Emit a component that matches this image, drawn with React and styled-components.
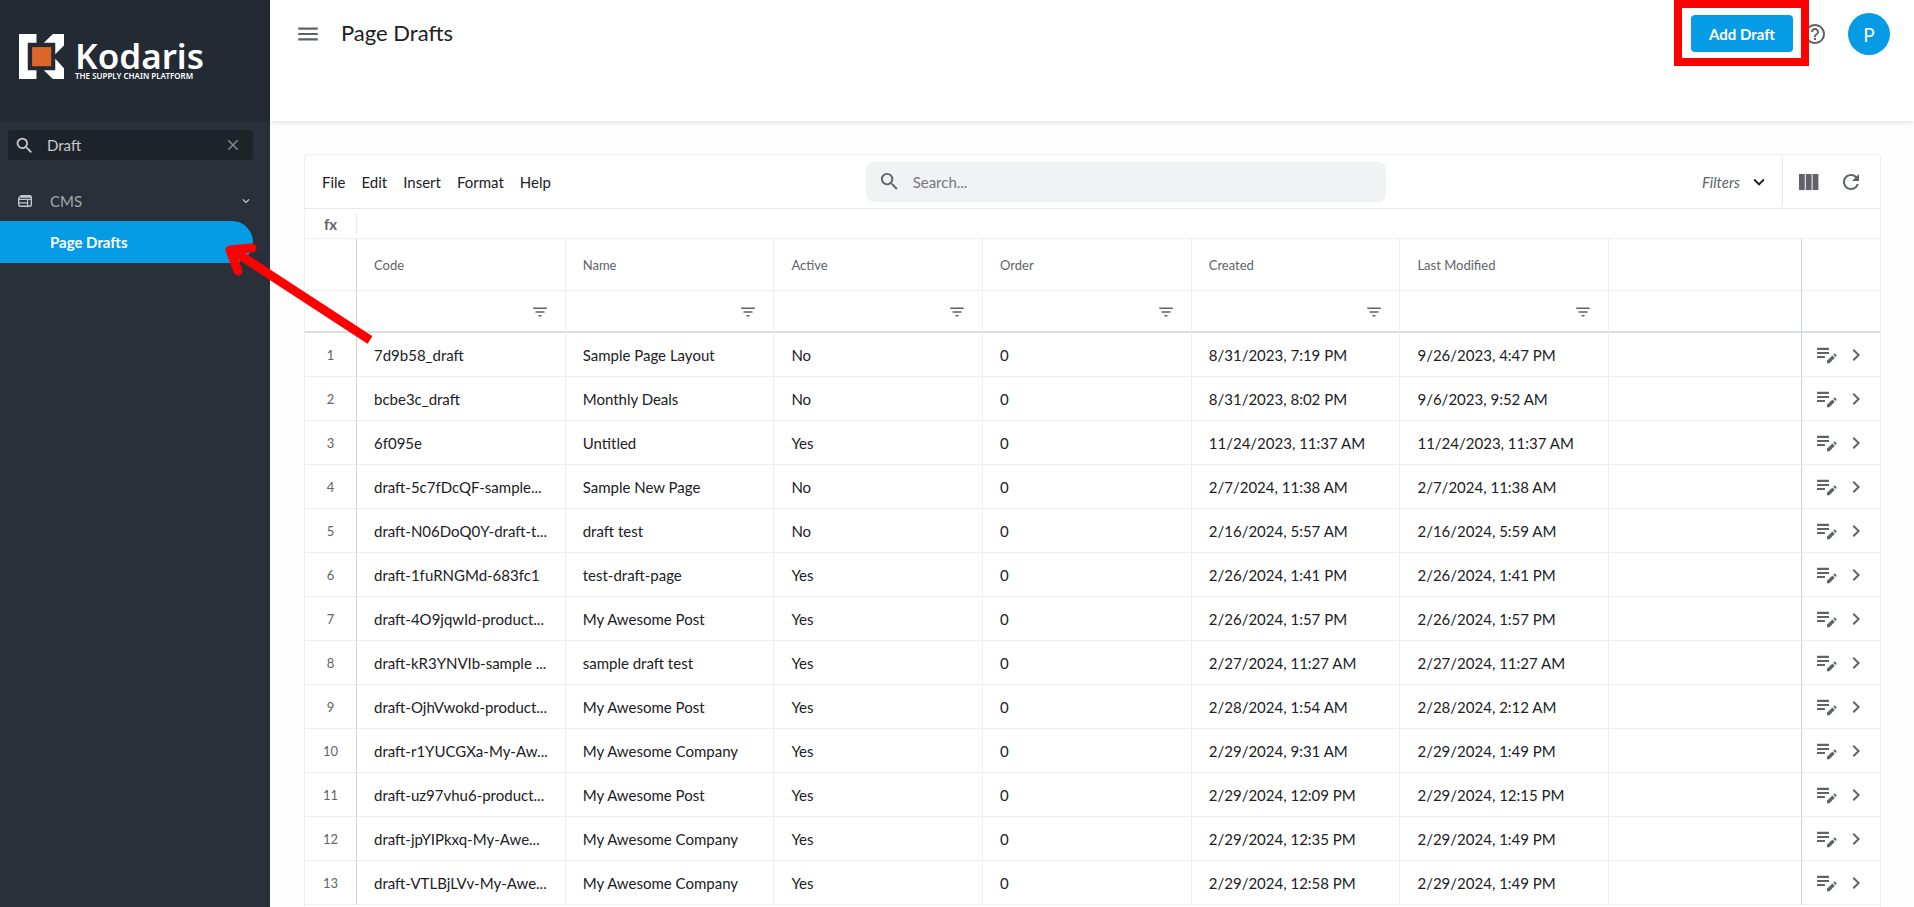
import React from "react";
import styled, { createGlobalStyle, ThemeProvider } from "styled-components";
import {
  MdChevronRight,
  MdClose,
  MdExpandMore,
  MdFilterList,
  MdHelpOutline,
  MdMenu,
  MdRefresh,
  MdSearch,
} from "react-icons/md";

const theme = {
  color: {
    blue: "#069be5",
    red: "#ff0000",
    orange: "#dc6529",
    white: "#ffffff",
    black: "#202124",
    gray: "#5f6368",
    line: "#eeeff0",
    pinLine: "#cfd2da",
    side: "#2a303a",
    sideTop: "#232a33",
    sideInput: "#1e2229",
  },
};

const columns = ["Code", "Name", "Active", "Order", "Created", "Last Modified"];

const drafts = [
  ["7d9b58_draft", "Sample Page Layout", "No", "0", "8/31/2023, 7:19 PM", "9/26/2023, 4:47 PM"],
  ["bcbe3c_draft", "Monthly Deals", "No", "0", "8/31/2023, 8:02 PM", "9/6/2023, 9:52 AM"],
  ["6f095e", "Untitled", "Yes", "0", "11/24/2023, 11:37 AM", "11/24/2023, 11:37 AM"],
  ["draft-5c7fDcQF-sample...", "Sample New Page", "No", "0", "2/7/2024, 11:38 AM", "2/7/2024, 11:38 AM"],
  ["draft-N06DoQ0Y-draft-t...", "draft test", "No", "0", "2/16/2024, 5:57 AM", "2/16/2024, 5:59 AM"],
  ["draft-1fuRNGMd-683fc1", "test-draft-page", "Yes", "0", "2/26/2024, 1:41 PM", "2/26/2024, 1:41 PM"],
  ["draft-4O9jqwId-product...", "My Awesome Post", "Yes", "0", "2/26/2024, 1:57 PM", "2/26/2024, 1:57 PM"],
  ["draft-kR3YNVIb-sample ...", "sample draft test", "Yes", "0", "2/27/2024, 11:27 AM", "2/27/2024, 11:27 AM"],
  ["draft-OjhVwokd-product...", "My Awesome Post", "Yes", "0", "2/28/2024, 1:54 AM", "2/28/2024, 2:12 AM"],
  ["draft-r1YUCGXa-My-Aw...", "My Awesome Company", "Yes", "0", "2/29/2024, 9:31 AM", "2/29/2024, 1:49 PM"],
  ["draft-uz97vhu6-product...", "My Awesome Post", "Yes", "0", "2/29/2024, 12:09 PM", "2/29/2024, 12:15 PM"],
  ["draft-jpYIPkxq-My-Awe...", "My Awesome Company", "Yes", "0", "2/29/2024, 12:35 PM", "2/29/2024, 1:49 PM"],
  ["draft-VTLBjLVv-My-Awe...", "My Awesome Company", "Yes", "0", "2/29/2024, 12:58 PM", "2/29/2024, 1:49 PM"],
];

const GlobalStyle = createGlobalStyle`
  * {
    box-sizing: border-box;
  }
  body {
    margin: 0;
    color: ${theme.color.black};
    font-family: Lato, "Open Sans", sans-serif;
    font-size: 15px;
  }
  button,
  input {
    font: inherit;
    color: inherit;
    border: 0;
    padding: 0;
    background: transparent;
  }
  button {
    cursor: pointer;
  }
  svg {
    display: block;
    flex-shrink: 0;
  }
`;

const Shell = styled.div`
  position: relative;
  display: flex;
  min-height: 100vh;
`;

const Sidebar = styled.aside`
  flex: 0 0 270px;
  min-width: 0;
  background: ${(props) => props.theme.color.side};
  color: #c8cacd;
`;

const Brand = styled.a`
  display: flex;
  align-items: flex-start;
  gap: 11px;
  height: 121px;
  padding: 34px 19px 0;
  background: ${(props) => props.theme.color.sideTop};
  color: ${(props) => props.theme.color.white};
  text-decoration: none;
`;

const BrandText = styled.span`
  display: flex;
  flex-direction: column;
  font-family: "Noto Sans", "Open Sans", sans-serif;
  font-weight: 600;
  white-space: nowrap;
  .name {
    padding-top: 6px;
    font-size: 35px;
    line-height: 32px;
  }
  .tagline {
    font-size: 8px;
    line-height: 8px;
  }
`;

const SideSearch = styled.div`
  display: flex;
  align-items: center;
  gap: 12px;
  height: 30px;
  margin: 9px 17px 0 8px;
  padding: 0 11px 0 6px;
  border-radius: 4px;
  background: ${(props) => props.theme.color.sideInput};
  input {
    flex: 1;
    min-width: 0;
    outline: none;
  }
  button {
    color: #85888c;
  }
`;

const Nav = styled.nav`
  margin-top: 20px;
`;

const NavGroup = styled.button`
  display: flex;
  align-items: center;
  width: 100%;
  height: 41px;
  padding: 0 17px;
  color: #a4a7ab;
  text-align: left;
  span {
    flex: 1;
    padding-left: 17px;
  }
`;

const NavLink = styled.a`
  display: flex;
  align-items: center;
  height: 42px;
  margin-right: 17px;
  padding-left: 50px;
  border-radius: 0 21px 21px 0;
  background: ${(props) => props.theme.color.blue};
  color: ${(props) => props.theme.color.white};
  font-weight: 700;
  text-decoration: none;
`;

const Main = styled.main`
  flex: 1;
  min-width: 0;
  display: flex;
  flex-direction: column;
  background: #fefefe;
`;

const Header = styled.header`
  display: flex;
  align-items: flex-start;
  height: 121px;
  padding: 13px 24px 0 25px;
  background: ${(props) => props.theme.color.white};
  box-shadow: 0 1px 6px rgba(0, 0, 0, 0.14);
  h1 {
    flex: 1;
    margin: 0 0 0 20px;
    font-size: 22px;
    font-weight: 400;
    line-height: 40px;
  }
`;

const HeaderItem = styled.div`
  display: flex;
  align-items: center;
  height: 42px;
  color: ${(props) => props.theme.color.gray};
`;

const Highlight = styled.div`
  position: relative;
  align-self: flex-start;
  margin: 2px 10px 0 0;
  &::after {
    content: "";
    position: absolute;
    z-index: 2;
    inset: -15px -16px -14px -17px;
    border: 8px solid ${(props) => props.theme.color.red};
    pointer-events: none;
  }
`;

const AddButton = styled.button`
  display: block;
  width: 102px;
  height: 37px;
  border-radius: 4px;
  background: ${(props) => props.theme.color.blue};
  color: ${(props) => props.theme.color.white};
  font-weight: 700;
`;

const Avatar = styled.button`
  width: 42px;
  height: 42px;
  margin-left: 21px;
  border-radius: 50%;
  background: ${(props) => props.theme.color.blue};
  color: ${(props) => props.theme.color.white};
  font-size: 19px;
`;

const Card = styled.section`
  flex: 1;
  margin: 33px 33px 0 34px;
  border: 1px solid ${(props) => props.theme.color.line};
  border-bottom: 0;
  border-radius: 4px 4px 0 0;
  background: ${(props) => props.theme.color.white};
`;

const Toolbar = styled.div`
  display: grid;
  grid-template-columns: 561fr 521fr 494fr;
  align-items: center;
  height: 54px;
  border-bottom: 1px solid #e6e7e9;
`;

const Menu = styled.div`
  display: flex;
  gap: 16px;
  padding-left: 17px;
`;

const Search = styled.div`
  display: flex;
  align-items: center;
  gap: 12px;
  height: 40px;
  padding: 0 12px;
  border-radius: 8px;
  background: #f0f2f4;
  color: ${(props) => props.theme.color.gray};
  input {
    flex: 1;
    min-width: 0;
    outline: none;
  }
  input::placeholder {
    color: #75787d;
    opacity: 1;
  }
`;

const Tools = styled.div`
  display: flex;
  align-self: stretch;
  justify-content: flex-end;
  color: ${(props) => props.theme.color.gray};
`;

const FilterButton = styled.button`
  display: flex;
  align-items: center;
  gap: 8px;
  padding-right: 12px;
  border-right: 1px solid #e6e7e9;
  border-radius: 0 4px 4px 0;
  font-style: italic;
  svg {
    color: ${(props) => props.theme.color.black};
  }
`;

const ToolIcons = styled.div`
  display: flex;
  align-items: center;
  gap: 20px;
  padding: 0 17px 0 16px;
`;

const FormulaBar = styled.div`
  display: flex;
  align-items: center;
  height: 30px;
  border-bottom: 1px solid ${(props) => props.theme.color.line};
  label {
    width: 52px;
    height: 20px;
    border-right: 1px solid #e6e7e9;
    color: ${(props) => props.theme.color.gray};
    font-weight: 700;
    line-height: 20px;
    text-align: center;
  }
  input {
    flex: 1;
    outline: none;
  }
`;

const Table = styled.table`
  width: 100%;
  table-layout: fixed;
  border-collapse: separate;
  border-spacing: 0;
`;

const Row = styled.tr`
  height: ${(props) => props.$height || 44}px;
`;

const Cell = styled.td`
  padding: 0 0 0 17px;
  border-right: 1px solid ${(props) => props.theme.color.line};
  border-bottom: 1px solid ${(props) => props.theme.color.line};
  overflow: hidden;
  text-align: left;
  white-space: nowrap;
  &:last-child {
    border-right: 0;
  }
  &:first-child,
  &:nth-last-child(2) {
    border-right-color: ${(props) => props.theme.color.pinLine};
  }
`;

const HeadCell = styled(Cell)`
  width: ${(props) => props.$width};
  color: ${(props) => props.theme.color.gray};
  font-size: 13px;
  font-weight: 400;
`;

const NumberCell = styled(Cell)`
  padding: 0;
  color: ${(props) => props.theme.color.gray};
  font-size: 13px;
  text-align: center;
`;

const FilterCell = styled(Cell)`
  padding-top: 2px;
  border-bottom: 2px solid #dcdfe2;
  button {
    display: block;
    margin: 0 16px 0 auto;
    color: ${(props) => props.theme.color.gray};
  }
`;

const RowActions = styled.div`
  display: flex;
  align-items: center;
  gap: 7px;
  margin-left: -2px;
  color: ${(props) => props.theme.color.gray};
`;

const Arrow = styled.svg`
  position: absolute;
  top: 236px;
  left: 218px;
  pointer-events: none;
`;

function LogoMark() {
  return (
    <svg width="45" height="45" viewBox="0 0 134 134">
      <g fill="#fff">
        <path d="M0 0H52V26H26V108H52V134H0Z" />
        <path d="M101 0H134V34L108 60V26H74Z" />
        <path d="M108 74L134 102V134H101L74 108H108Z" />
      </g>
      <rect x="39" y="39" width="57" height="57" fill={theme.color.orange} />
    </svg>
  );
}

function CmsIcon() {
  return (
    <svg width="16" height="14" viewBox="0 0 16 14" fill="none" stroke="#c3c5c8">
      <path
        d="M4 1.6H12.5Q14.3 1.6 14.3 3.4V10.4Q14.3 12.2 12.5 12.2H3.5Q1.7 12.2 1.7 10.4V4.2Z"
        strokeWidth="1.4"
      />
      <path d="M3.6 2.6H14" strokeWidth="2.4" />
      <path d="M2 5.4H14M10.6 5.4V12M2 8.8H10.6" strokeWidth="1.2" />
    </svg>
  );
}

function ColumnsIcon() {
  return (
    <svg width="20" height="16" viewBox="0 0 20 16" fill="currentColor">
      <path d="M0 0H5.8V16H0ZM6.8 0H12.6V16H6.8ZM13.6 0H19.4V16H13.6Z" />
    </svg>
  );
}

function EditRowIcon() {
  return (
    <svg width="20" height="19" viewBox="0 0 20 19" fill="currentColor">
      <path d="M0 2.8H12V4.9H0ZM0 6.9H12V9H0ZM0 11H8V13.1H0Z" />
      <path d="M10 15.8L15.4 10.4L17.8 12.8L12.4 18.3H10Z" />
      <path d="M16.2 9.6L17.1 8.8Q17.8 8.3 18.4 8.9L19.4 9.9Q19.9 10.5 19.4 11.1L18.6 12Z" />
    </svg>
  );
}

function App() {
  const [navSearch, setNavSearch] = React.useState("Draft");
  const [search, setSearch] = React.useState("");
  const [formula, setFormula] = React.useState("");

  return (
    <ThemeProvider theme={theme}>
      <GlobalStyle />
      <Shell>
        <Sidebar>
          <Brand href="/">
            <LogoMark />
            <BrandText>
              <span className="name">Kodaris</span>
              <span className="tagline">THE SUPPLY CHAIN PLATFORM</span>
            </BrandText>
          </Brand>
          <SideSearch>
            <MdSearch size={21} />
            <input
              aria-label="Search menu"
              value={navSearch}
              onChange={(e) => setNavSearch(e.target.value)}
            />
            <button aria-label="Clear" onClick={() => setNavSearch("")}>
              <MdClose size={18} />
            </button>
          </SideSearch>
          <Nav>
            <NavGroup>
              <CmsIcon />
              <span>CMS</span>
              <MdExpandMore size={14} color="#d4d6d8" />
            </NavGroup>
            <NavLink href="#page-drafts">Page Drafts</NavLink>
          </Nav>
        </Sidebar>

        <Main>
          <Header>
            <HeaderItem as="button" aria-label="Menu">
              <MdMenu size={26} />
            </HeaderItem>
            <h1>Page Drafts</h1>
            <HeaderItem>
              <Highlight>
                <AddButton>Add Draft</AddButton>
              </Highlight>
              <button aria-label="Help">
                <MdHelpOutline size={24} color={theme.color.gray} />
              </button>
              <Avatar>P</Avatar>
            </HeaderItem>
          </Header>

          <Card>
            <Toolbar>
              <Menu>
                <button>File</button>
                <button>Edit</button>
                <button>Insert</button>
                <button>Format</button>
                <button>Help</button>
              </Menu>
              <Search>
                <MdSearch size={23} />
                <input
                  aria-label="Search drafts"
                  placeholder="Search..."
                  value={search}
                  onChange={(e) => setSearch(e.target.value)}
                />
              </Search>
              <Tools>
                <FilterButton>
                  Filters
                  <MdExpandMore size={22} />
                </FilterButton>
                <ToolIcons>
                  <button aria-label="Columns">
                    <ColumnsIcon />
                  </button>
                  <button aria-label="Refresh">
                    <MdRefresh size={24} />
                  </button>
                </ToolIcons>
              </Tools>
            </Toolbar>
            <FormulaBar>
              <label htmlFor="formula">fx</label>
              <input
                id="formula"
                value={formula}
                onChange={(e) => setFormula(e.target.value)}
              />
            </FormulaBar>
            <Table>
              <thead>
                <Row $height={52}>
                  <HeadCell $width="52px" />
                  {columns.map((name) => (
                    <HeadCell as="th" scope="col" key={name} $width="13.25%">
                      {name}
                    </HeadCell>
                  ))}
                  <HeadCell />
                  <HeadCell $width="78px" />
                </Row>
                <Row $height={42}>
                  <FilterCell />
                  {columns.map((name) => (
                    <FilterCell key={name}>
                      <button aria-label={`Filter ${name}`}>
                        <MdFilterList size={18} />
                      </button>
                    </FilterCell>
                  ))}
                  <FilterCell />
                  <FilterCell />
                </Row>
              </thead>
              <tbody>
                {drafts.map((draft, i) => (
                  <Row key={draft[0]}>
                    <NumberCell>{i + 1}</NumberCell>
                    {draft.map((value, j) => (
                      <Cell key={columns[j]}>{value}</Cell>
                    ))}
                    <Cell />
                    <Cell>
                      <RowActions>
                        <button aria-label="Edit">
                          <EditRowIcon />
                        </button>
                        <button aria-label="Open">
                          <MdChevronRight size={24} />
                        </button>
                      </RowActions>
                    </Cell>
                  </Row>
                ))}
              </tbody>
            </Table>
          </Card>
        </Main>

        <Arrow width="160" height="112" viewBox="218 236 160 112">
          <g fill="none" stroke={theme.color.red} strokeWidth="9">
            <path d="M370 340L232 250" />
            <path
              d="M252 248L230 250L238 271"
              strokeLinecap="round"
              strokeLinejoin="round"
            />
          </g>
        </Arrow>
      </Shell>
    </ThemeProvider>
  );
}

export default App;
